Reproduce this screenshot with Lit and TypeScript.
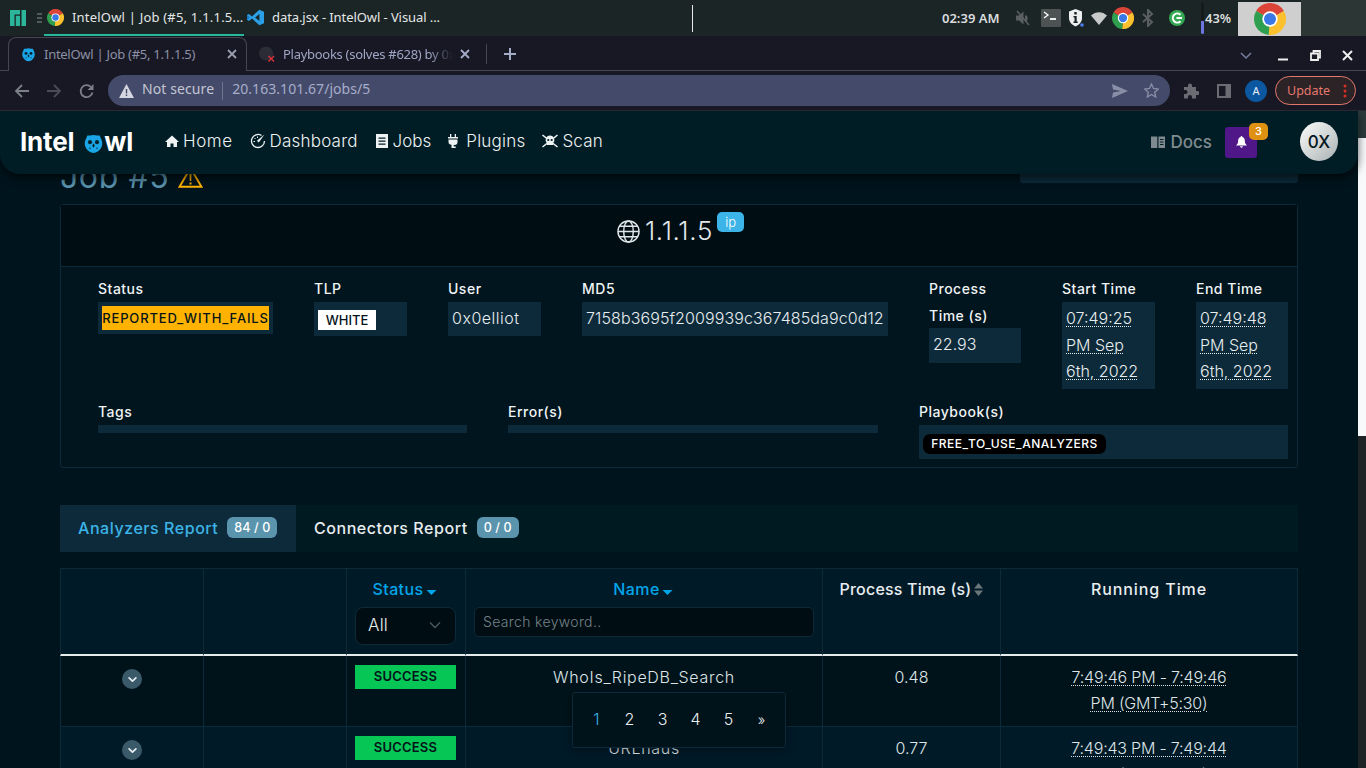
import { LitElement, html, css, svg } from "lit";
import { customElement } from "lit/decorators.js";

const chrome = (cls: string) => html`<svg class=${cls} viewBox="0 0 48 48">
  <path fill="#db4437" d="M24 24L3.2 12A24 24 0 0 1 44.8 12Z"/>
  <path fill="#fbc02d" d="M24 24L44.8 12A24 24 0 0 1 22 47.9Z"/>
  <path fill="#2e9e4f" d="M24 24L22 47.9A24 24 0 0 1 3.2 12Z"/>
  <circle cx="24" cy="24" r="11.5" fill="#fff"/><circle cx="24" cy="24" r="9" fill="#3b78e7"/></svg>`;

const owl = (cls: string) => html`<svg class=${cls} viewBox="0 0 24 24">
  <path fill="#19a5e6" d="M5 3.500L8 3.500A11 11 0 0 1 16 3.500L19 3.500 21 8A11 11 0 0 1 12 23.500 11 11 0 0 1 3 8Z"/>
  <circle cx="8" cy="11" r="2.300" fill="#06212c"/><circle cx="16" cy="11" r="2.300" fill="#06212c"/>
  <path fill="#06212c" d="M12 12.500l1.500 2.700-1.500 2.300-1.500-2.300Z"/>
  <circle cx="8" cy="18" r=".8" fill="#06212c"/><circle cx="16" cy="18" r=".8" fill="#06212c"/></svg>`;

const chevronDown = html`<svg class="rowchev" viewBox="0 0 20 20"><path d="M6 8l4 4 4-4" fill="none" stroke="#e6edf0" stroke-width="2" stroke-linecap="round" stroke-linejoin="round"/></svg>`;
const sortDown = html`<svg class="caret" viewBox="0 0 12 6"><path d="M0 0h12L6 6Z" fill="#00a5e8"/></svg>`;

@customElement("app-root")
export class AppRoot extends LitElement {
  static styles = css`
    :host { display: block; width: 1366px; height: 768px; overflow: hidden; font-family: Inter, "Liberation Sans", sans-serif; background: #00141d; }
    .root { display: flex; flex-direction: column; height: 768px; }
    svg { display: block; flex: none; }

    /* system bar */
    .sys { height: 36px; flex: none; display: flex; align-items: center; background: #1b2526; font-family: "Noto Sans", sans-serif; color: #e4e7e7; font-size: 13px; }
    .manjaro { width: 16px; height: 16px; margin-left: 10px; }
    .grip { width: 5px; height: 10px; margin-left: 11px; }
    .task { display: flex; align-items: center; height: 36px; box-sizing: border-box; border-bottom: 2px solid transparent; white-space: nowrap; }
    .task.on { width: 200px; margin-left: 2px; padding-left: 3px; border-bottom-color: #27b79b; }
    .task.code { margin-left: 3px; }
    .ico17 { width: 17px; height: 17px; }
    .task-text { margin-left: 8px; letter-spacing: .2px; }
    .code .task-text { margin-left: 8px; letter-spacing: -.08px; }
    .vline { width: 1px; height: 27px; background: #e8e8e8; margin-left: 252px; }
    .clock { margin-left: 249px; font-weight: 600; width: 60px; color: #d9dcdc; white-space: nowrap; }
    .mute { width: 16px; height: 16px; margin-left: 13px; }
    .term { width: 20px; height: 18px; margin-left: 10px; }
    .shield { width: 16px; height: 18px; margin-left: 7px; }
    .wifi { width: 16px; height: 14px; margin-left: 7px; }
    .chrome22 { width: 22px; height: 22px; margin-left: 5px; }
    .bt { width: 14px; height: 18px; margin-left: 7px; }
    .gc { width: 16px; height: 16px; margin-left: 14px; }
    .vol { width: 3px; height: 32px; margin-left: 16px; background: linear-gradient(#151b1b 60%, #6b74e0 60%); border-radius: 2px; }
    .pct { margin-left: 1px; width: 33px; font-weight: 600; color: #d9dcdc; }
    .tile { width: 63px; height: 34px; margin-top: 2px; background: #cfcfcf; display: flex; align-items: center; justify-content: center; }
    .chrome32 { width: 32px; height: 32px; }
    .rest { flex: 1; height: 36px; background: #2c3634; }

    /* tab strip */
    .tabs { height: 35px; flex: none; display: flex; align-items: flex-end; background: #181825; font-family: "Noto Sans", sans-serif; font-size: 13px; box-shadow: inset 0 -1px 0 #46464f; }
    .tab { display: flex; align-items: center; height: 34px; box-sizing: border-box; white-space: nowrap; overflow: hidden; }
    .tab.on { width: 239px; margin-left: 8px; padding: 0 10px 1px 12px; background: #181825; border: 1px solid #46464f; border-bottom: none; border-radius: 8px 8px 0 0; color: #8c90a4; }
    .tab.off { width: 234px; padding: 0 0 0 12px; color: #9fa6c4; }
    .fav { width: 15px; height: 16px; }
    .tab-text { margin-left: 8px; letter-spacing: -.28px; }
    .fade { width: 174px; overflow: hidden; -webkit-mask-image: linear-gradient(90deg, #000 86%, transparent); mask-image: linear-gradient(90deg, #000 86%, transparent); }
    .push { flex: 1; }
    .x { width: 10px; height: 10px; }
    .tab.on .x { margin-right: -1px; }
    .tab.off .x { margin-left: 7px; margin-right: 11px; }
    .ghub { width: 16px; height: 17px; }
    .sep { width: 1px; height: 20px; background: #46464f; margin: 0 0 7px 5px; }
    .plus { width: 14px; height: 14px; margin: 0 0 10px 16px; }
    .spacer { flex: 1; }
    .wctl { display: flex; align-items: center; margin-bottom: 10px; }
    .tabchev { width: 12px; height: 8px; margin-right: 26px; }
    .wmin { width: 10px; height: 10px; margin-right: 22px; }
    .wmax { width: 11px; height: 11px; margin-right: 21px; }
    .wx { width: 11px; height: 11px; margin-right: 13px; }

    /* toolbar */
    .tool { height: 39px; flex: none; display: flex; align-items: center; background: #181825; font-family: "Noto Sans", sans-serif; }
    .nav-ico { width: 16px; height: 16px; }
    .back { margin-left: 14px; }
    .fwd { margin-left: 16px; }
    .reload { margin-left: 17px; }
    .omni { width: 1062px; height: 31px; margin-left: 13px; background: #444a69; border-radius: 16px; display: flex; align-items: center; font-size: 14px; line-height: 28px; }
    .warn { width: 15px; height: 14px; margin-left: 11px; }
    .ns { margin-left: 8px; color: #c3c6d3; letter-spacing: .1px; padding-bottom: 3px; }
    .div { width: 1px; height: 18px; background: #70758f; margin-left: 8px; }
    .url { margin-left: 9px; color: #a7aecb; letter-spacing: .05px; padding-bottom: 3px; }
    .send { width: 16px; height: 14px; margin-right: 16px; }
    .star { width: 15px; height: 15px; margin-right: 11px; }
    .puzzle { width: 16px; height: 16px; margin-left: 13px; }
    .panel { width: 14px; height: 14px; margin-left: 18px; }
    .avatar { width: 22px; height: 22px; border-radius: 50%; background: #0b57a0; color: #e8eefc; font-size: 11px; display: flex; align-items: center; justify-content: center; margin-left: 14px; }
    .update { width: 81px; height: 29px; box-sizing: border-box; margin-left: 8px; border: 1px solid #e5786c; border-radius: 15px; background: #2c2327; color: #e5786c; font-size: 12.500px; display: flex; align-items: center; padding-left: 11px; }
    .dots { width: 4px; height: 14px; margin-left: auto; margin-right: 8px; }

    /* viewport */
    .view { flex: 1; min-height: 0; display: flex; position: relative; overflow: hidden; border-top: 1px solid #2a2632; }
    .page { width: 1358px; flex: none; box-sizing: border-box; padding: 47px 60px 0; color: #e8edef; position: relative; overflow: hidden; background: #00141d; }
    .scroll { width: 8px; flex: none; background: linear-gradient(#2c3a3c 0 27px, #f8f9fb 27px 325px, #1f2326 325px); }

    /* navbar */
    .navbar { position: absolute; z-index: 5; top: 0; left: 0; width: 1358px; height: 63px; box-sizing: border-box; padding: 0 20px 2px; display: flex; align-items: center; background: #001d25; border-radius: 0 0 20px 20px; box-shadow: 0 4px 10px rgba(0,0,0,.6); }
    .brand { display: flex; align-items: center; font-weight: 700; font-size: 26px; letter-spacing: -.2px; color: #fff; width: 145px; }
    .brand-owl { width: 21px; height: 22px; margin-left: 9px; margin-top: 2px; }
    .item { display: flex; align-items: center; gap: 4px; font-size: 17px; font-weight: 300; color: #eef2f3; margin-right: 17px; letter-spacing: .2px; white-space: nowrap; margin-top: -2px; }
    .item.home { letter-spacing: .55px; }
    .item.jobs { letter-spacing: 0; margin-right: 15px; }
    .item.plugins span { margin-left: 2px; }
    .i14 { width: 14px; height: 14px; }
    .i16 { width: 16px; height: 16px; }
    .nav-spacer { flex: 1; }
    .docs { display: flex; align-items: center; gap: 5px; color: #7f8b8f; font-size: 17px; font-weight: 500; }
    .bell { width: 32px; height: 31px; margin-left: 13px; background: #4f1787; border-radius: 3px; display: flex; align-items: center; justify-content: center; position: relative; margin-top: 1px; }
    .bell-i { width: 11px; height: 12px; }
    .count { position: absolute; top: -4px; right: -11px; width: 19px; height: 17px; border-radius: 5px; background: #df9112; font-size: 11px; font-weight: 500; color: #fff; display: flex; align-items: center; justify-content: center; }
    .user { width: 38px; height: 39px; border-radius: 50%; margin-left: 43px; background: linear-gradient(135deg, #fdfdfd, #a9b1b2); color: #04161e; font-size: 17px; font-weight: 500; display: flex; align-items: center; justify-content: center; }

    /* title */
    .titlerow { display: flex; justify-content: space-between; height: 38px; margin-bottom: 8px; }
    .title { display: flex; align-items: center; gap: 9px; font-size: 32px; line-height: 38px; font-weight: 400; letter-spacing: .6px; color: #5a93ae; }
    .tri { width: 25px; height: 22px; }
    .actions { width: 278px; height: 25px; background: #0d2a3a; border-radius: 0 0 3px 3px; }

    /* card */
    .card { border: 1px solid #0d2a3a; border-radius: 3px; height: 264px; box-sizing: border-box; background: #00151e; }
    .cardhead { height: 62px; box-sizing: border-box; padding-bottom: 11px; border-bottom: 1px solid #0d2a3a; background: #000d12; display: flex; align-items: center; justify-content: center; }
    .obs { display: flex; align-items: center; font-size: 26px; font-weight: 300; letter-spacing: .7px; color: #e2e8ea; padding-left: 3px; }
    .globe { width: 23px; height: 23px; margin-right: 5px; margin-top: 2px; }
    .ip { align-self: flex-start; margin-left: 4px; margin-top: -3px; width: 27px; height: 20px; border-radius: 5px; background: #3cb4e7; color: #fff; font-size: 13px; letter-spacing: 0; display: flex; align-items: center; justify-content: center; }
    .meta { display: grid; grid-template-columns: 216px 134px 134px 347px 133px 134px 92px; padding: 8px 9px 0 37px; align-items: start; height: 131px; box-sizing: border-box; }
    .label { font-size: 14px; font-weight: 500; line-height: 27px; color: #f0f3f4; letter-spacing: .5px; white-space: nowrap; }
    .col { padding-right: 41px; }
    .col.last { padding-right: 0; }
    .val { background: #0d2a3a; padding: 3px 4px 5px; font-size: 16px; font-weight: 300; line-height: 26px; letter-spacing: .5px; color: #e8edef; }
    .val.status { height: 32px; box-sizing: border-box; padding: 4px; }
    .val.md5 { height: 34px; box-sizing: border-box; letter-spacing: .1px; white-space: nowrap; overflow: hidden; }
    .val.tlp { height: 34px; box-sizing: border-box; padding: 8px 4px 0; }
    .val.date { padding: 3px 4px 4px; line-height: 26.600px; letter-spacing: 0; }
    .val.proc { padding: 3px 4px 0; height: 35px; box-sizing: border-box; letter-spacing: 0; margin-top: -1px; }
    .dotted { text-decoration: underline dotted; text-underline-offset: 2px; text-decoration-thickness: 1px; }
    .chip-amber { display: block; height: 24px; background: #ffb300; color: #05131a; font-size: 13px; font-weight: 500; line-height: 24px; text-align: center; letter-spacing: .85px; white-space: nowrap; }
    .chip-white { display: block; width: 58px; height: 20px; background: #fff; color: #05131a; font-size: 13px; font-weight: 500; line-height: 20px; text-align: center; letter-spacing: 0; }
    .meta2 { display: grid; grid-template-columns: 369px 370px 369px; column-gap: 41px; padding: 0 9px 0 37px; }
    .empty { height: 8px; background: #0d2a3a; }
    .pb { background: #0d2a3a; height: 34px; box-sizing: border-box; padding: 7px 4px 0; }
    .pill { display: inline-block; width: 183px; height: 20px; border-radius: 7px; background: #000; color: #fff; font-size: 12px; font-weight: 500; line-height: 20px; text-align: center; letter-spacing: .5px; box-sizing: border-box; white-space: nowrap; }

    /* report tabs */
    .rtabs { display: flex; height: 47px; margin-top: 37px; background: #001a22; }
    .rtab { display: flex; align-items: center; gap: 9px; font-size: 16px; font-weight: 500; padding: 0 18px 2px; color: #e8edef; letter-spacing: .55px; white-space: nowrap; }
    .rtab.on { width: 236px; box-sizing: border-box; background: #0d2a3a; color: #3cb4e7; }
    .rcount { height: 21px; padding: 0 7px; border-radius: 6px; background: #5b94ad; color: #fff; font-size: 12.500px; font-weight: 500; line-height: 21px; letter-spacing: .1px; }

    /* table */
    .table { margin-top: 16px; display: grid; grid-template-columns: 144px 143px 119px 357px 178px 297px; border-top: 1px solid #0d2a3a; }
    .th, .td { border-right: 1px solid #0d2a3a; box-sizing: border-box; text-align: center; }
    .first { border-left: 1px solid #0d2a3a; }
    .th { height: 87px; background: #011a28; border-bottom: 2px solid #e6ebec; padding: 10px 8px 0; font-size: 16px; font-weight: 500; color: #e8edef; letter-spacing: .2px; }
    .th.statuscol { padding-right: 9px; }
    .thlabel { display: flex; align-items: center; justify-content: center; gap: 3px; height: 20px; white-space: nowrap; }
    .thlabel.run { letter-spacing: .9px; }
    .blue { color: #00a5e8; letter-spacing: .4px; gap: 2px; padding-right: 2px; }
    .caret { width: 11px; height: 5px; margin-top: 7px; }
    .sort { width: 9px; height: 13px; }
    .select { display: flex; align-items: center; justify-content: space-between; height: 38px; margin-top: 8px; padding: 0 14px 3px 12px; box-sizing: border-box; background: #000d12; border: 1px solid #0d2a3a; border-radius: 8px; font-size: 17px; font-weight: 300; color: #e8edef; }
    .selchev { width: 12px; height: 8px; }
    .search { height: 30px; margin-top: 8px; box-sizing: border-box; border: 1px solid #0d2a3a; border-radius: 5px; background: #000d12; padding-left: 8px; text-align: left; font-size: 14px; font-weight: 300; line-height: 28px; color: #77828a; letter-spacing: .35px; }
    .td { font-size: 16px; font-weight: 300; line-height: 26px; padding: 8px 8px 0; color: #dfe5e7; border-bottom: 1px solid #0d2a3a; height: 71px; }
    .td.statuscol { padding-right: 9px; }
    .odd { background: #00131b; }
    .even { background: #011a28; }
    .rowbtn { width: 20px; height: 20px; border-radius: 50%; background: #3a5a6a; margin: 5px auto 0; display: flex; align-items: center; justify-content: center; }
    .rowchev { width: 17px; height: 17px; }
    .ok { display: block; height: 24px; margin: 1px 0 0; background: #06c755; color: #05131a; font-size: 13px; font-weight: 600; line-height: 22px; letter-spacing: .2px; }
    .wide { letter-spacing: .7px; }
    .runcell { padding: 8px 60px 0; letter-spacing: -.2px; }

    /* pagination */
    .pager { position: absolute; z-index: 3; left: 572px; bottom: 20px; width: 214px; height: 56px; box-sizing: border-box; display: flex; align-items: center; padding: 0 0 2px 7px; background: #00121a; border: 1px solid #0d2a3a; border-radius: 3px; box-shadow: 0 2px 8px rgba(0,0,0,.4); font-size: 16px; font-weight: 300; color: #e8edef; }
    .pg { width: 33px; text-align: center; }
    .pg.cur { color: #3cb4e7; }
    .pg.more { font-size: 14px; }
  `;

  render() {
    return html`<div class="root">
      ${this.sysbar()}
      ${this.tabstrip()}
      ${this.toolbar()}
      <div class="view">
        ${this.navbar()}
        <div class="page">
          <div class="titlerow">
            <div class="title">Job #5
              <svg class="tri" viewBox="0 0 25 22"><path d="M12.500 2L23.500 20.800H1.500Z" fill="none" stroke="#ffb300" stroke-width="2"/><path d="M11.500 8h2l-.3 7h-1.400ZM11.500 16.500h2v2h-2Z" fill="#ffb300"/></svg>
            </div>
            <div class="actions"></div>
          </div>
          ${this.jobCard()}
          <div class="rtabs">
            <div class="rtab on">Analyzers Report <span class="rcount">84 / 0</span></div>
            <div class="rtab">Connectors Report <span class="rcount">0 / 0</span></div>
          </div>
          ${this.table()}
          <div class="pager">
            <span class="pg cur">1</span><span class="pg">2</span><span class="pg">3</span><span class="pg">4</span><span class="pg">5</span><span class="pg more">»</span>
          </div>
        </div>
        <div class="scroll"></div>
      </div>
    </div>`;
  }

  sysbar() {
    return html`<div class="sys">
      <svg class="manjaro" viewBox="0 0 16 16"><path fill="#2bb59a" d="M0 0h10v4.500H4.500V16H0ZM5.800 5.800H10V16H5.800ZM11.500 0H16V16H11.500Z"/></svg>
      <svg class="grip" viewBox="0 0 5 10"><path stroke="#8a9090" d="M0 1h5M0 5h5M0 9h5"/></svg>
      <div class="task on">${chrome("ico17")}<span class="task-text">IntelOwl | Job (#5, 1.1.1.5...</span></div>
      <div class="task code">
        <svg class="ico17" viewBox="0 0 24 24"><path fill="#2a9fe6" d="M17.500 1L24 4v16l-6.500 3L7 13.500 2.800 17 0 15.500V8.500L2.800 7 7 10.500ZM17.500 7l-6 5 6 5Z"/><path fill="#1a78c2" d="M0 8.500V15.500L4 12Z"/></svg>
        <span class="task-text">data.jsx - IntelOwl - Visual ...</span>
      </div>
      <div class="vline"></div>
      <div class="clock">02:39 AM</div>
      <svg class="mute" viewBox="0 0 16 16"><path fill="#5a5f5f" d="M1 5.500h3L8.500 1.500v13L4 10.500H1ZM10 5l2 1 .8 2-.8 3-2 1Z"/><path stroke="#5a5f5f" stroke-width="1.500" d="M2 1l12 14"/></svg>
      <svg class="term" viewBox="0 0 20 18"><rect width="20" height="18" rx="1" fill="#4d5252"/><path d="M3 3l4 3-4 3" fill="none" stroke="#fff" stroke-width="1.300"/><path d="M9 10h6" stroke="#fff" stroke-width="1.800"/></svg>
      <svg class="shield" viewBox="0 0 16 18"><path fill="#eef0f0" d="M7.500 0l6.500 2.500V9c0 4-3 7-6.500 8.500C4 16 1 13 1 9V2.500Z"/><path fill="#1b2526" d="M6.300 3h2.400v2.400H6.300ZM5.500 7h3.200v5.500h1V14H5.500v-1.500h1V8.500h-1Z"/><circle cx="14" cy="16" r="1.800" fill="#4f7df0"/></svg>
      <svg class="wifi" viewBox="0 0 16 14"><path fill="#c8caca" d="M0 4.500C4.500 0 11.500 0 16 4.500L8 14Z"/></svg>
      ${chrome("chrome22")}
      <svg class="bt" viewBox="0 0 14 18"><path fill="none" stroke="#5a5f5f" stroke-width="2" d="M2 5l9 8-4 4V1l4 4-9 8"/></svg>
      <svg class="gc" viewBox="0 0 16 16"><circle cx="8" cy="8" r="8" fill="#34a853"/><path fill="none" stroke="#fff" stroke-width="2" d="M11.500 4.800A4.500 4.500 0 1 0 11.500 11.200M7.500 8H13"/></svg>
      <div class="vol"></div>
      <div class="pct">43%</div>
      <div class="tile">${chrome("chrome32")}</div>
      <div class="rest"></div>
    </div>`;
  }

  tabstrip() {
    const x = (c: string) => svg`<path d="M1 1l8 8M9 1l-8 8" stroke=${c} stroke-width="1.800"/>`;
    return html`<div class="tabs">
      <div class="tab on">${owl("fav")}<span class="tab-text">IntelOwl | Job (#5, 1.1.1.5)</span><span class="push"></span>
        <svg class="x" viewBox="0 0 10 10">${x("#9a9eae")}</svg></div>
      <div class="tab off">
        <svg class="ghub" viewBox="0 0 17 17"><circle cx="7.500" cy="7.500" r="7.500" fill="#2b2c36"/><path d="M10 10l6 6M16 10l-6 6" stroke="#d9333a" stroke-width="1.500"/></svg>
        <span class="tab-text fade">Playbooks (solves #628) by 0x0elliot</span>
        <svg class="x" viewBox="0 0 10 10">${x("#a5acc8")}</svg>
      </div>
      <div class="sep"></div>
      <svg class="plus" viewBox="0 0 14 14"><path d="M7 1v12M1 7h12" stroke="#a5acc8" stroke-width="2"/></svg>
      <div class="spacer"></div>
      <div class="wctl">
        <svg class="tabchev" viewBox="0 0 12 8"><path d="M1 1l5 5 5-5" fill="none" stroke="#777d9e" stroke-width="1.500"/></svg>
        <svg class="wmin" viewBox="0 0 10 10"><path d="M0 8.500h10" stroke="#eee" stroke-width="2"/></svg>
        <svg class="wmax" viewBox="0 0 11 11"><path fill="none" stroke="#eee" stroke-width="1.800" d="M3.500 3V1H10V7.500H8M1 3.500H8V10H1Z"/></svg>
        <svg class="wx" viewBox="0 0 11 11"><path d="M1 1l9 9M10 1l-9 9" stroke="#eee" stroke-width="2"/></svg>
      </div>
    </div>`;
  }

  toolbar() {
    return html`<div class="tool">
      <svg class="nav-ico back" viewBox="0 0 16 16"><path d="M15 8H2M8 2L2 8l6 6" fill="none" stroke="#7c7e88" stroke-width="1.800"/></svg>
      <svg class="nav-ico fwd" viewBox="0 0 16 16"><path d="M1 8h13M8 2l6 6-6 6" fill="none" stroke="#4a4b57" stroke-width="1.800"/></svg>
      <svg class="nav-ico reload" viewBox="0 0 16 16"><path d="M13.500 9.500A6 6 0 1 1 12 4" fill="none" stroke="#7c7e88" stroke-width="1.800"/><path d="M14.500 1v6h-6Z" fill="#7c7e88"/></svg>
      <div class="omni">
        <svg class="warn" viewBox="0 0 15 14"><path d="M7.500 0L15 14H0Z" fill="#d5d7e0"/><path d="M6.800 5h1.400v4.500H6.800ZM6.800 10.500h1.400V12H6.800Z" fill="#444a69"/></svg>
        <span class="ns">Not secure</span><span class="div"></span><span class="url">20.163.101.67/jobs/5</span>
        <span class="spacer"></span>
        <svg class="send" viewBox="0 0 16 14"><path d="M0 0l16 7-16 7 1-5.500L9 7 1 5.500Z" fill="#8a8fa8"/></svg>
        <svg class="star" viewBox="0 0 15 15"><path d="M7.500 1l2 4.500 4.800.5-3.600 3.200 1 4.800-4.200-2.500L3.300 14l1-4.800L.7 6l4.800-.5Z" fill="none" stroke="#8a8fa8" stroke-width="1.300"/></svg>
      </div>
      <svg class="puzzle" viewBox="0 0 16 16"><path fill="#6b6b73" d="M1 4h4V2.500a2 2 0 0 1 4 0V4h4v4h1.500a2 2 0 0 1 0 4H13v3.500H9V14a2 2 0 0 0-4 0v1.500H1V11h1.500a2 2 0 0 0 0-4H1Z"/></svg>
      <svg class="panel" viewBox="0 0 14 14"><rect x="1" y="1" width="12" height="12" fill="none" stroke="#6b6b73" stroke-width="2"/><rect x="8.500" y="1" width="4.500" height="12" fill="#6b6b73"/></svg>
      <div class="avatar">A</div>
      <div class="update">Update
        <svg class="dots" viewBox="0 0 4 14"><circle cx="2" cy="2" r="1.500" fill="#d93025"/><circle cx="2" cy="7" r="1.500" fill="#d93025"/><circle cx="2" cy="12" r="1.500" fill="#d93025"/></svg>
      </div>
    </div>`;
  }

  navbar() {
    const fill = "#eef2f3";
    return html`<div class="navbar">
      <div class="brand"><span>Intel</span>${owl("brand-owl")}<span>wl</span></div>
      <div class="item home"><svg class="i14" viewBox="0 0 14 14"><path fill=${fill} d="M7 1.500L14 8h-2v5H8.500V9.500h-3V13H2V8H0Z"/></svg>Home</div>
      <div class="item"><svg class="i16" viewBox="0 0 16 16"><path fill="none" stroke=${fill} stroke-width="1.300" d="M11.500 2.500A6.500 6.500 0 1 0 14.500 8"/><path fill=${fill} d="M14.500 1.500L8.800 9.600 6.900 7.800Z"/><path stroke=${fill} d="M3.500 8.500h1.500M7.500 3.500V5M4.500 5l1 1"/></svg>Dashboard</div>
      <div class="item jobs"><svg class="i14" viewBox="0 0 14 14"><path fill-rule="evenodd" fill=${fill} d="M1 0H13V14H1ZM3.500 3.500v1.300h7V3.500ZM3.500 6.500v1.300h7V6.500ZM3.500 9.500v1.300h7V9.500Z"/></svg>Jobs</div>
      <div class="item plugins"><svg class="i14" viewBox="0 0 14 14"><path fill=${fill} d="M4 0h1.300v3H8.700V0H10v3h2v1.500H2V3h2ZM2.500 5.500h9V8a3 3 0 0 1-3 3h-.8v1.500h2V14H5.500v-3.200A3 3 0 0 1 2.500 8Z"/></svg><span>Plugins</span></div>
      <div class="item"><svg class="i16" viewBox="0 0 16 16"><path stroke=${fill} stroke-width="1.600" d="M.5 2l15 12M15.500 2L.5 14"/><path fill=${fill} d="M8 2.500a4.500 4.500 0 0 1 3 7.800V12H5v-1.700A4.500 4.500 0 0 1 8 2.500Z"/><circle cx="6.300" cy="7" r="1.100" fill="#001d25"/><circle cx="9.700" cy="7" r="1.100" fill="#001d25"/></svg>Scan</div>
      <div class="nav-spacer"></div>
      <div class="docs"><svg class="i14" viewBox="0 0 14 14"><path fill-rule="evenodd" fill="#7f8b8f" d="M0 1.500H6.300V13H0ZM7.500 1.500H14V13H7.500ZM9 4v1h3.500V4ZM9 6.500v1h3.500v-1ZM9 9v1h3.500V9Z"/></svg>Docs</div>
      <div class="bell"><svg class="bell-i" viewBox="0 0 13 14"><path fill="#fff" d="M6.500 0A1 1 0 0 1 7.500 1.200C9.500 1.800 10.500 3.500 10.500 6c0 2 .8 3.500 2.500 5H0c1.700-1.500 2.500-3 2.500-5 0-2.500 1-4.200 3-4.800A1 1 0 0 1 6.500 0ZM4.800 12h3.400a1.700 1.700 0 0 1-3.400 0Z"/></svg><span class="count">3</span></div>
      <div class="user">0X</div>
    </div>`;
  }

  jobCard() {
    return html`<div class="card">
      <div class="cardhead">
        <div class="obs">
          <svg class="globe" viewBox="0 0 24 24"><g fill="none" stroke="#dfe6e8" stroke-width="1.500"><circle cx="12" cy="12" r="11"/><ellipse cx="12" cy="12" rx="5" ry="11"/><path d="M1 12h22M2.500 6.500h19M2.500 17.500h19"/></g></svg>
          1.1.1.5<span class="ip">ip</span>
        </div>
      </div>
      <div class="meta">
        <div class="col"><div class="label">Status</div><div class="val status"><span class="chip-amber">REPORTED_WITH_FAILS</span></div></div>
        <div class="col"><div class="label">TLP</div><div class="val tlp"><span class="chip-white">WHITE</span></div></div>
        <div class="col"><div class="label">User</div><div class="val">0x0elliot</div></div>
        <div class="col"><div class="label">MD5</div><div class="val md5">7158b3695f2009939c367485da9c0d12</div></div>
        <div class="col"><div class="label">Process<br />Time (s)</div><div class="val proc">22.93</div></div>
        <div class="col"><div class="label">Start Time</div><div class="val date"><span class="dotted">07:49:25 PM Sep 6th, 2022</span></div></div>
        <div class="col last"><div class="label">End Time</div><div class="val date"><span class="dotted">07:49:48 PM Sep 6th, 2022</span></div></div>
      </div>
      <div class="meta2">
        <div><div class="label">Tags</div><div class="empty"></div></div>
        <div><div class="label">Error(s)</div><div class="empty"></div></div>
        <div><div class="label">Playbook(s)</div><div class="pb"><span class="pill">FREE_TO_USE_ANALYZERS</span></div></div>
      </div>
    </div>`;
  }

  table() {
    const rows = [
      { cls: "odd", name: "WhoIs_RipeDB_Search", time: "0.48", run: "7:49:46 PM - 7:49:46 PM (GMT+5:30)" },
      { cls: "even", name: "URLhaus", time: "0.77", run: "7:49:43 PM - 7:49:44 PM (GMT+5:30)" },
    ];
    return html`<div class="table">
      <div class="th first"></div>
      <div class="th"></div>
      <div class="th statuscol"><div class="thlabel blue">Status ${sortDown}</div>
        <div class="select">All <svg class="selchev" viewBox="0 0 12 8"><path d="M1 1.500l5 5 5-5" fill="none" stroke="#4c5a62" stroke-width="1.300"/></svg></div></div>
      <div class="th"><div class="thlabel blue">Name ${sortDown}</div><div class="search">Search keyword..</div></div>
      <div class="th"><div class="thlabel">Process Time (s)
        <svg class="sort" viewBox="0 0 9 13"><path d="M4.500 0L9 5.500H0ZM0 7.500H9L4.500 13Z" fill="#6a757b"/></svg></div></div>
      <div class="th"><div class="thlabel run">Running Time</div></div>
      ${rows.map((r) => html`
        <div class="td first ${r.cls}"><div class="rowbtn">${chevronDown}</div></div>
        <div class="td ${r.cls}"></div>
        <div class="td statuscol ${r.cls}"><span class="ok">SUCCESS</span></div>
        <div class="td wide ${r.cls}">${r.name}</div>
        <div class="td ${r.cls}">${r.time}</div>
        <div class="td runcell ${r.cls}"><span class="dotted">${r.run}</span></div>
      `)}
    </div>`;
  }
}
